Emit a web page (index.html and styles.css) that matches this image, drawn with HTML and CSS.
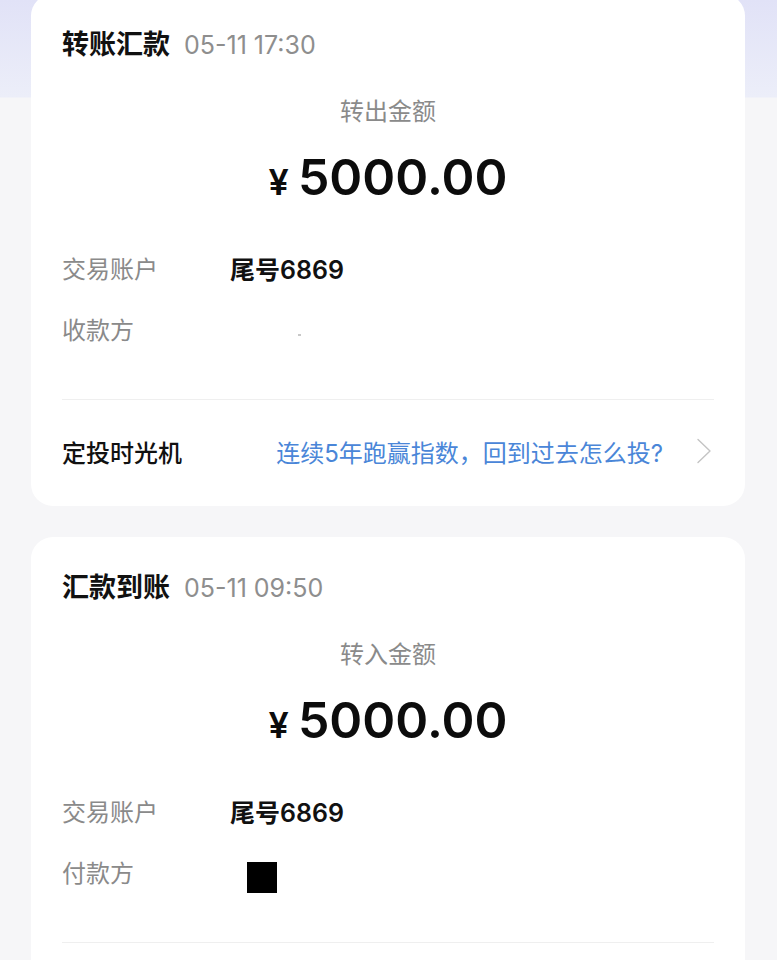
FILE: index.html
```html
<!DOCTYPE html>
<html lang="zh-CN">
<head>
    <meta charset="UTF-8">
    <meta name="viewport" content="width=device-width, initial-scale=1.0">
    <title>交易详情</title>
    <link rel="stylesheet" href="styles.css">
</head>
<body>
    <div class="page">
        <div class="card card-first">
            <div class="card-head">
                <span class="head-title">转账汇款</span>
                <span class="head-time">05-11 17:30</span>
            </div>
            <div class="amount-label">转出金额</div>
            <div class="amount"><span class="yen">¥</span>5000.00</div>
            <div class="row">
                <span class="row-label">交易账户</span>
                <span class="row-value">尾号6869</span>
            </div>
            <div class="row">
                <span class="row-label">收款方</span>
                <span class="row-value"><span class="speck"></span></span>
            </div>
            <div class="divider"></div>
            <div class="promo">
                <span class="promo-title">定投时光机</span>
                <span class="promo-link">连续5年跑赢指数，回到过去怎么投?</span>
                <svg class="chevron" width="16" height="26" viewBox="0 0 16 26">
                    <path d="M2 1.5 L14 13 L2 24.5" fill="none" stroke="#c4c4c4" stroke-width="1.4" stroke-linecap="round" stroke-linejoin="round"/>
                </svg>
            </div>
        </div>

        <div class="card">
            <div class="card-head">
                <span class="head-title">汇款到账</span>
                <span class="head-time">05-11 09:50</span>
            </div>
            <div class="amount-label">转入金额</div>
            <div class="amount"><span class="yen">¥</span>5000.00</div>
            <div class="row">
                <span class="row-label">交易账户</span>
                <span class="row-value">尾号6869</span>
            </div>
            <div class="row">
                <span class="row-label">付款方</span>
                <span class="row-value"><span class="redact"></span></span>
            </div>
            <div class="divider"></div>
        </div>
    </div>
</body>
</html>
```
FILE: styles.css
```css
body {
    margin: 0;
    font-family: "Inter", "Noto Sans CJK SC", sans-serif;
    color: #111;
    background: linear-gradient(to bottom, #e1e2f7 0, #eceef9 97px, #f6f6f8 98px);
    min-height: 960px;
    overflow: hidden;
}
.page {
    padding: 0 32px 0 31px;
}
.card {
    background: #fff;
    border-radius: 22px;
    padding: 34px 31px 38px;
    margin-top: 31px;
}
.card-first {
    margin-top: -6px;
}
.card-head {
    display: flex;
    align-items: baseline;
    gap: 14px;
    height: 34px;
    line-height: 34px;
}
.head-title {
    font-size: 27px;
    font-weight: 700;
    color: #111;
}
.head-time {
    font-size: 25px;
    color: #8e8e8e;
}
.amount-label {
    margin-top: 33px;
    text-align: center;
    font-size: 24px;
    line-height: 34px;
    color: #8a8a8a;
}
.amount {
    margin-top: 16px;
    text-align: center;
    font-size: 50px;
    font-weight: 600;
    line-height: 64px;
    color: #0c0c0c;
}
.yen {
    font-size: 36px;
    margin-right: 9px;
}
.row {
    display: flex;
    align-items: center;
    height: 34px;
    line-height: 34px;
    margin-top: 27px;
}
.amount + .row {
    margin-top: 39px;
}
.row-label {
    width: 168px;
    font-size: 24px;
    color: #8a8a8a;
}
.row-value {
    font-size: 25px;
    font-weight: 600;
    color: #111;
    display: flex;
    align-items: center;
}
.speck {
    display: inline-block;
    width: 3px;
    height: 2px;
    margin: 8px 0 0 68px;
    background: #c8c8c8;
}
.redact {
    display: inline-block;
    width: 30px;
    height: 31px;
    margin: 6px 0 0 17px;
    background: #000;
}
.divider {
    height: 1px;
    background: #efefef;
    margin-top: 51px;
}
.promo {
    display: flex;
    align-items: center;
    height: 34px;
    margin-top: 34px;
}
.promo-title {
    font-size: 24px;
    font-weight: 500;
    color: #111;
}
.promo-link {
    margin-left: auto;
    font-size: 24px;
    color: #4a86d8;
}
.chevron {
    margin-left: 33px;
    margin-right: 2px;
}
```
